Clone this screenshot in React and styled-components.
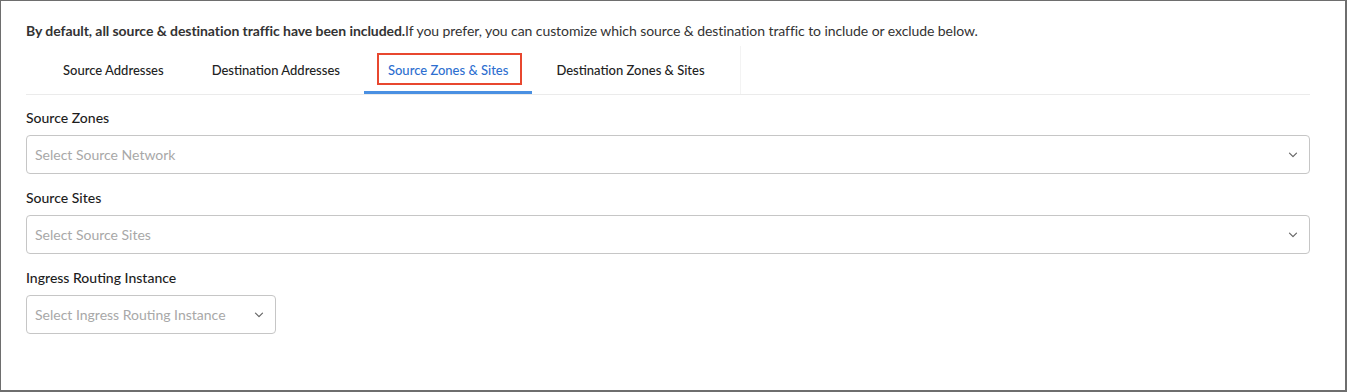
import React from "react";
import styled, { createGlobalStyle } from "styled-components";

const Global = createGlobalStyle`
  html, body { margin: 0; padding: 0; background: #fff; }
  body { font-family: Lato, "Open Sans", Arial, sans-serif; }
  * { box-sizing: border-box; }
`;

const Frame = styled.div`
  width: 1347px;
  height: 392px;
  border-style: solid;
  border-color: #6e6e6e;
  border-width: 1px 2px 2px 1px;
  padding: 20px 35px 0 25px;
  background: #fff;
`;

const Intro = styled.p`
  margin: 0;
  font-size: 14px;
  line-height: 20px;
  color: #333;
  letter-spacing: -0.07px;
  b { font-weight: 700; }
`;

const TabBar = styled.div`
  margin-top: 5px;
  display: flex;
  border-bottom: 1px solid #ebebeb;
`;

const TabList = styled.div`
  display: flex;
  padding: 0 11px 0 13px;
  border-right: 1px solid #f3f3f3;
`;

const Tab = styled.div`
  position: relative;
  height: 48px;
  padding: 3px 24px 0;
  display: flex;
  align-items: center;
  font-size: 13px;
  font-weight: 500;
  color: ${(p) => (p.$active ? "#2e6fd0" : "#222")};
  border-bottom: 3px solid ${(p) => (p.$active ? "#4a90e2" : "transparent")};
  white-space: nowrap;
`;

const FocusRing = styled.span`
  position: absolute;
  left: 13px;
  right: 10px;
  top: 7px;
  bottom: 6px;
  border: 2px solid #e8472f;
  pointer-events: none;
`;

const Field = styled.div`
  display: flex;
  flex-direction: column;
  margin-top: ${(p) => p.$top}px;
`;

const Label = styled.label`
  font-size: 14px;
  line-height: 20px;
  font-weight: 500;
  color: #1d1d1d;
`;

const Select = styled.div`
  margin-top: 7px;
  width: ${(p) => (p.$width ? p.$width + "px" : "100%")};
  height: 39px;
  border: 1px solid #c6c6c6;
  border-radius: 4px;
  display: flex;
  align-items: center;
  justify-content: space-between;
  padding: 0 11px 0 8px;
`;

const Placeholder = styled.span`
  font-size: 14px;
  color: #a8a8a8;
`;

const Chevron = () => (
  <svg width="10" height="6" viewBox="0 0 10 6" fill="none">
    <path d="M1.5 1.2l3.5 3.5 3.5-3.5" stroke="#666" strokeWidth="1.2" strokeLinecap="round" strokeLinejoin="round" />
  </svg>
);

const tabs = ["Source Addresses", "Destination Addresses", "Source Zones & Sites", "Destination Zones & Sites"];

export default function App() {
  return (
    <>
      <Global />
      <Frame>
        <Intro>
          <b>By default, all source &amp; destination traffic have been included.</b>
          If you prefer, you can customize which source &amp; destination traffic to include or exclude below.
        </Intro>
        <TabBar>
          <TabList>
            {tabs.map((t, i) => (
              <Tab key={t} $active={i === 2}>
                {i === 2 && <FocusRing />}
                {t}
              </Tab>
            ))}
          </TabList>
        </TabBar>
        <Field $top={13}>
          <Label>Source Zones</Label>
          <Select>
            <Placeholder>Select Source Network</Placeholder>
            <Chevron />
          </Select>
        </Field>
        <Field $top={14}>
          <Label>Source Sites</Label>
          <Select>
            <Placeholder>Select Source Sites</Placeholder>
            <Chevron />
          </Select>
        </Field>
        <Field $top={14}>
          <Label>Ingress Routing Instance</Label>
          <Select $width={250}>
            <Placeholder>Select Ingress Routing Instance</Placeholder>
            <Chevron />
          </Select>
        </Field>
      </Frame>
    </>
  );
}
